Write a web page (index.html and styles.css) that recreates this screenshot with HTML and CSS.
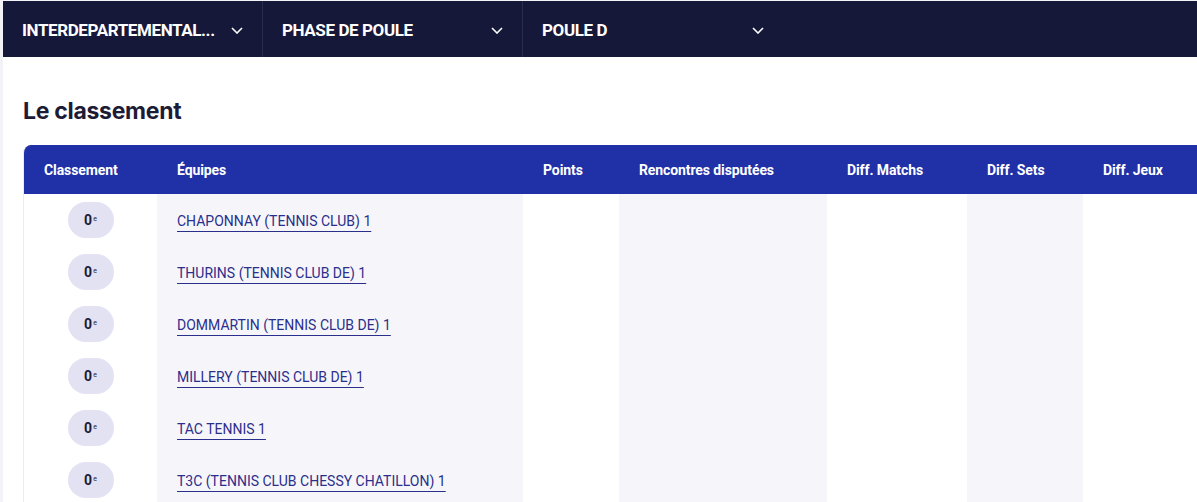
FILE: index.html
```html
<!DOCTYPE html>
<html lang="fr">
<head>
  <meta charset="UTF-8">
  <title>Le classement</title>
  <link rel="stylesheet" href="styles.css">
</head>
<body>
<div class="page">
  <nav class="filters">
    <button class="filter" title="INTERDEPARTEMENTALE 2">
      <span class="filter-label">INTERDEPARTEMENTAL...</span>
      <svg class="chevron" viewBox="0 0 12 7" width="12" height="7"><path d="M1 1l5 5 5-5" fill="none" stroke="#fff" stroke-width="1.6"/></svg>
    </button>
    <button class="filter">
      <span class="filter-label">PHASE DE POULE</span>
      <svg class="chevron" viewBox="0 0 12 7" width="12" height="7"><path d="M1 1l5 5 5-5" fill="none" stroke="#fff" stroke-width="1.6"/></svg>
    </button>
    <button class="filter">
      <span class="filter-label">POULE D</span>
      <svg class="chevron" viewBox="0 0 12 7" width="12" height="7"><path d="M1 1l5 5 5-5" fill="none" stroke="#fff" stroke-width="1.6"/></svg>
    </button>
  </nav>

  <main class="content">
    <h1 class="title">Le classement</h1>
    <div class="ranking">
      <table class="ranking-table">
        <colgroup>
          <col class="c-rank">
          <col class="c-team alt">
          <col class="c-points">
          <col class="c-played alt">
          <col class="c-matchs">
          <col class="c-sets alt">
          <col class="c-jeux">
        </colgroup>
        <thead>
          <tr>
            <th>Classement</th>
            <th>Équipes</th>
            <th>Points</th>
            <th>Rencontres disputées</th>
            <th>Diff. Matchs</th>
            <th>Diff. Sets</th>
            <th>Diff. Jeux</th>
          </tr>
        </thead>
        <tbody>
          <tr>
            <td class="rank"><span class="pill">0<sup>e</sup></span></td>
            <td><a href="#">CHAPONNAY (TENNIS CLUB) 1</a></td>
            <td></td><td></td><td></td><td></td><td></td>
          </tr>
          <tr>
            <td class="rank"><span class="pill">0<sup>e</sup></span></td>
            <td><a href="#">THURINS (TENNIS CLUB DE) 1</a></td>
            <td></td><td></td><td></td><td></td><td></td>
          </tr>
          <tr>
            <td class="rank"><span class="pill">0<sup>e</sup></span></td>
            <td><a href="#">DOMMARTIN (TENNIS CLUB DE) 1</a></td>
            <td></td><td></td><td></td><td></td><td></td>
          </tr>
          <tr>
            <td class="rank"><span class="pill">0<sup>e</sup></span></td>
            <td><a href="#">MILLERY (TENNIS CLUB DE) 1</a></td>
            <td></td><td></td><td></td><td></td><td></td>
          </tr>
          <tr>
            <td class="rank"><span class="pill">0<sup>e</sup></span></td>
            <td><a href="#">TAC TENNIS 1</a></td>
            <td></td><td></td><td></td><td></td><td></td>
          </tr>
          <tr>
            <td class="rank"><span class="pill">0<sup>e</sup></span></td>
            <td><a href="#">T3C (TENNIS CLUB CHESSY CHATILLON) 1</a></td>
            <td></td><td></td><td></td><td></td><td></td>
          </tr>
        </tbody>
      </table>
    </div>
  </main>
</div>
</body>
</html>
```

FILE: styles.css
```css
body {
    margin: 0;
    background-color: #f3f3f7;
    font-family: Roboto, "Liberation Sans", sans-serif;
    overflow: hidden;
}

.page {
    padding: 1px 0 0 3px;
}

.filters {
    display: flex;
    height: 56px;
    background-color: #16183a;
}

.filter {
    display: flex;
    align-items: center;
    justify-content: space-between;
    gap: 8px;
    width: 260px;
    padding: 2px 19px 0;
    border: 0;
    border-right: 1px solid #2a2c4c;
    background: none;
    color: #fff;
    font-family: Roboto, "Liberation Sans", sans-serif;
    font-size: 17px;
    font-weight: 700;
    letter-spacing: -0.4px;
    cursor: pointer;
}

.filter:last-child {
    border-right: 0;
}

.filter-label {
    white-space: nowrap;
}

.chevron {
    flex: none;
}

.content {
    background-color: #fff;
    padding: 0 0 0 20px;
    overflow: hidden;
    height: 445px;
}

.title {
    margin: 40px 0 20px;
    font-family: Inter, "Liberation Sans", sans-serif;
    font-size: 23px;
    line-height: 28px;
    font-weight: 700;
    color: #1d1b35;
    letter-spacing: -0.3px;
}

.ranking {
    width: 1200px;
    border-radius: 8px 8px 0 0;
    overflow: hidden;
    border-left: 1px solid #ebebf1;
}

.ranking-table {
    width: 100%;
    border-collapse: collapse;
    table-layout: fixed;
}

.c-rank { width: 133px; }
.c-team { width: 366px; }
.c-points { width: 96px; }
.c-played { width: 208px; }
.c-matchs { width: 140px; }
.c-sets { width: 116px; }

col.alt {
    background-color: #f6f6fa;
}

.ranking-table th {
    height: 49px;
    padding: 0 20px;
    background-color: #2031a8;
    color: #fff;
    font-size: 14px;
    font-weight: 700;
    letter-spacing: -0.1px;
    text-align: left;
    white-space: nowrap;
}

.ranking-table td {
    height: 52px;
    padding: 0 20px;
    vertical-align: middle;
}

.ranking-table td.rank {
    text-align: center;
    padding: 0;
}

.pill {
    display: inline-flex;
    align-items: center;
    justify-content: center;
    width: 46px;
    height: 36px;
    border-radius: 18px;
    background-color: #e2e2f3;
    color: #1d1b35;
    font-size: 14px;
    font-weight: 700;
}

.pill sup {
    font-size: 7px;
    font-weight: 400;
    margin-left: 1px;
    position: relative;
    top: -1px;
}

.ranking-table a {
    color: #2b2f8c;
    font-size: 14px;
    text-decoration: underline;
    text-decoration-color: #2b2f8c;
    text-underline-offset: 5px;
    text-decoration-thickness: 1px;
}
```
